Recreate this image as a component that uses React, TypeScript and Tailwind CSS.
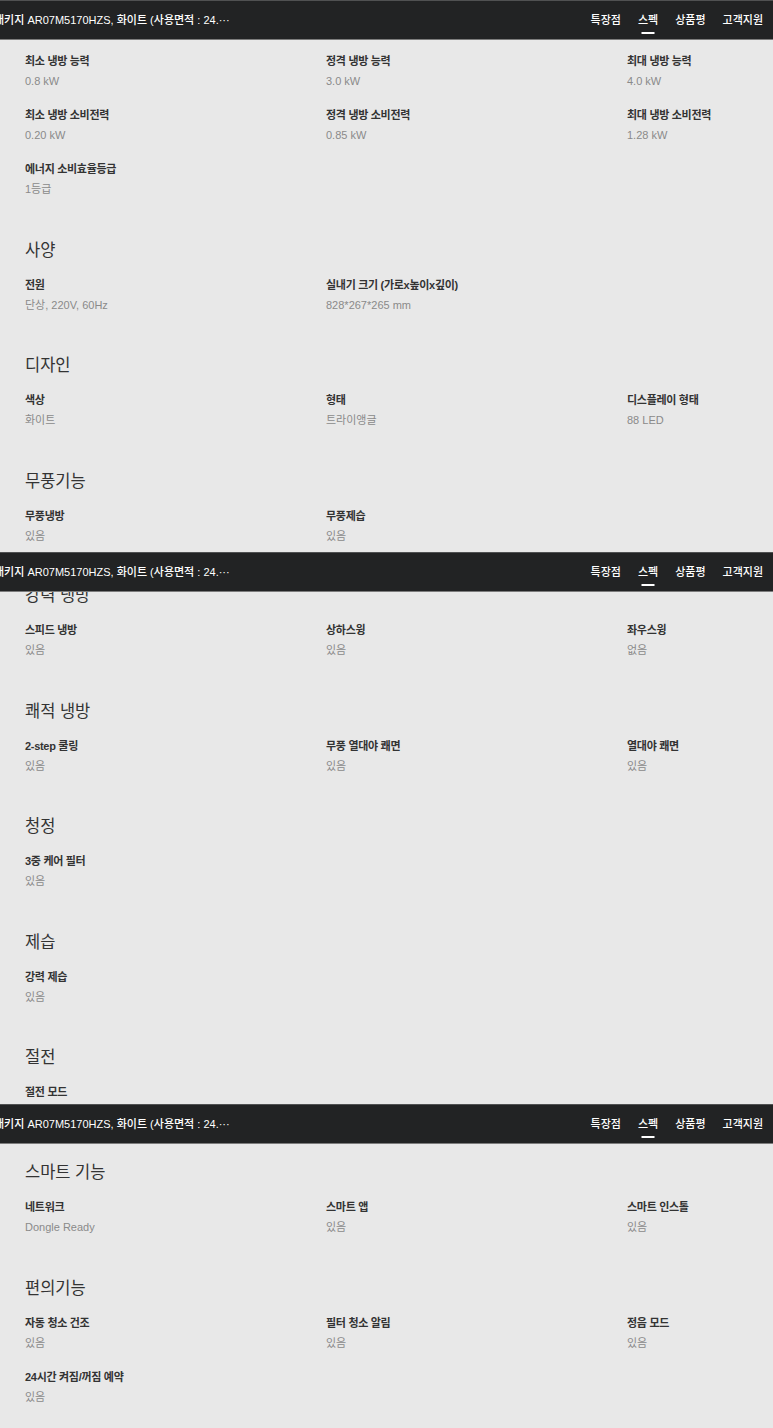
import React from "react";

type TSpec = [string, string];
type TSection = { title?: string; rows: TSpec[] };

const navItems = ["특장점", "스펙", "상품평", "고객지원"];

const panel1: TSection[] = [
  {
    rows: [
      ["최소 냉방 능력", "0.8 kW"],
      ["정격 냉방 능력", "3.0 kW"],
      ["최대 냉방 능력", "4.0 kW"],
      ["최소 냉방 소비전력", "0.20 kW"],
      ["정격 냉방 소비전력", "0.85 kW"],
      ["최대 냉방 소비전력", "1.28 kW"],
      ["에너지 소비효율등급", "1등급"],
    ],
  },
  {
    title: "사양",
    rows: [
      ["전원", "단상, 220V, 60Hz"],
      ["실내기 크기 (가로x높이x깊이)", "828*267*265 mm"],
    ],
  },
  {
    title: "디자인",
    rows: [
      ["색상", "화이트"],
      ["형태", "트라이앵글"],
      ["디스플레이 형태", "88 LED"],
    ],
  },
  {
    title: "무풍기능",
    rows: [
      ["무풍냉방", "있음"],
      ["무풍제습", "있음"],
    ],
  },
];

const panel2: TSection[] = [
  {
    title: "강력 냉방",
    rows: [
      ["스피드 냉방", "있음"],
      ["상하스윙", "있음"],
      ["좌우스윙", "없음"],
    ],
  },
  {
    title: "쾌적 냉방",
    rows: [
      ["2-step 쿨링", "있음"],
      ["무풍 열대야 쾌면", "있음"],
      ["열대야 쾌면", "있음"],
    ],
  },
  { title: "청정", rows: [["3중 케어 필터", "있음"]] },
  { title: "제습", rows: [["강력 제습", "있음"]] },
  { title: "절전", rows: [["절전 모드", "있음"]] },
];

const panel3: TSection[] = [
  {
    title: "스마트 기능",
    rows: [
      ["네트워크", "Dongle Ready"],
      ["스마트 앱", "있음"],
      ["스마트 인스톨", "있음"],
    ],
  },
  {
    title: "편의기능",
    rows: [
      ["자동 청소 건조", "있음"],
      ["필터 청소 알림", "있음"],
      ["정음 모드", "있음"],
      ["24시간 켜짐/꺼짐 예약", "있음"],
    ],
  },
];

// 상단 고정 바 (스크롤 캡처마다 반복됨)
const StickyBar = () => (
  <div className="flex h-[40px] shrink-0 items-center justify-between overflow-hidden border-t border-b border-t-[#505152] border-b-[#7c7c7c] bg-[#222324] text-white">
    <div className="-ml-[6px] whitespace-nowrap text-[11px] font-medium">
      패키지 AR07M5170HZS, 화이트 (사용면적 : 24.···
    </div>
    <nav className="flex items-center gap-[17px] pr-[10px] text-[11px] font-medium">
      {navItems.map((item) => (
        <div key={item} className="relative whitespace-nowrap">
          {item}
          {item === "스펙" && (
            <span className="absolute left-1/2 top-[20px] h-[2px] w-[13px] -translate-x-1/2 bg-white" />
          )}
        </div>
      ))}
    </nav>
  </div>
);

const SpecSection = ({ title, rows }: TSection) => (
  <div className="flex flex-col">
    {title && <h3 className="mb-[13px] text-[16.5px] leading-[24px] font-normal text-[#333]">{title}</h3>}
    <div className="grid grid-cols-[301px_301px_146px] gap-y-[14px]">
      {rows.map(([label, value]) => (
        <div key={label} className="flex flex-col whitespace-nowrap">
          <div className="text-[11px] leading-[20px] font-bold tracking-[-0.3px] text-[#333]">{label}</div>
          <div className="text-[11px] leading-[20px] text-[#8a8a8a]">{value}</div>
        </div>
      ))}
    </div>
  </div>
);

const Panel = ({ sections, height, offset }: { sections: TSection[]; height: string; offset: string }) => (
  <div className="flex flex-col">
    <StickyBar />
    <div className={`${height} overflow-hidden`}>
      <div className={`${offset} flex flex-col gap-[38.5px] pl-[25px]`}>
        {sections.map((s, i) => (
          <SpecSection key={i} {...s} />
        ))}
      </div>
    </div>
  </div>
);

export default function App() {
  return (
    <div className="h-[1428px] w-[773px] overflow-hidden bg-[#e8e8e8] font-[family-name:'Liberation_Sans','Noto_Sans_CJK_KR',sans-serif]">
      <Panel sections={panel1} height="h-[512px]" offset="pt-[11px]" />
      <Panel sections={panel2} height="h-[512px]" offset="-mt-[9px]" />
      <Panel sections={panel3} height="h-[284px]" offset="pt-[16px]" />
    </div>
  );
}
